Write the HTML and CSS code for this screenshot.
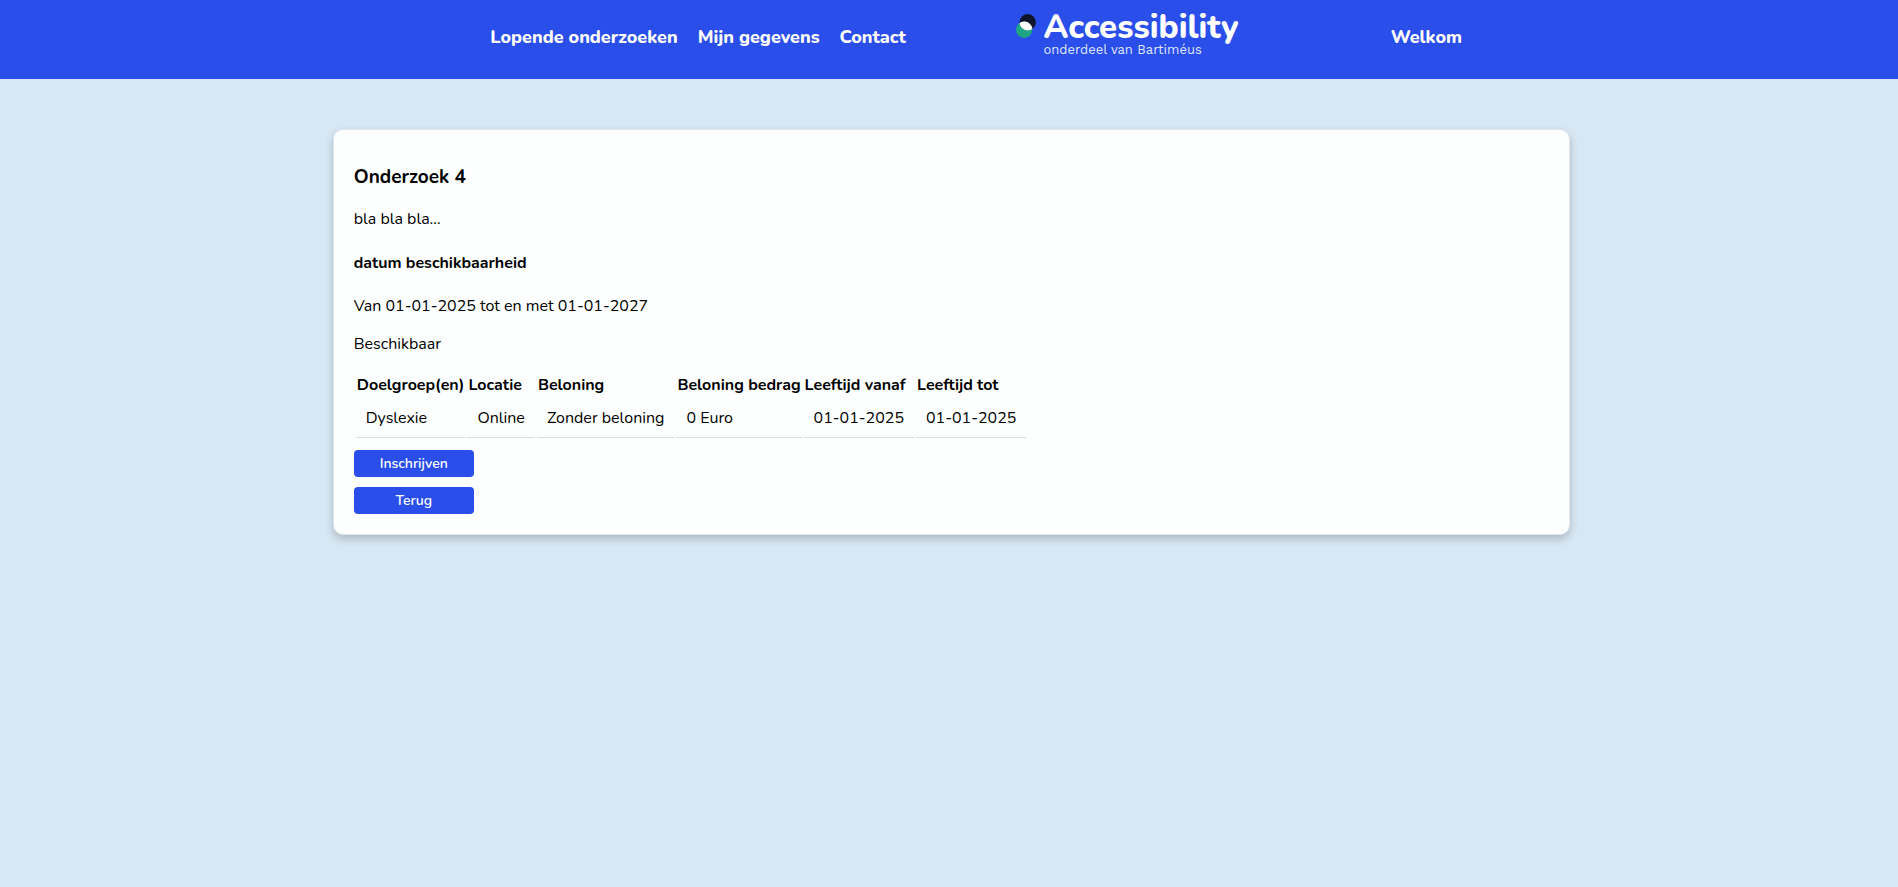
FILE: index.html
```html
<!DOCTYPE html>
<html lang="nl">
<head>
<meta charset="utf-8">
<title>Onderzoek 4 - Accessibility</title>
<link rel="stylesheet" href="styles.css">
</head>
<body>
<header class="site-header">
  <nav class="main-nav">
    <a href="#">Lopende onderzoeken</a>
    <a href="#">Mijn gegevens</a>
    <a href="#">Contact</a>
  </nav>
  <a class="logo" href="#">
    <svg class="logo-mark" viewBox="0 0 20 24" width="20" height="24" aria-hidden="true">
      <defs><clipPath id="upper"><circle cx="11.700" cy="8.200" r="8.200"/></clipPath></defs>
      <circle cx="11.700" cy="8.200" r="8.200" fill="#11152b"/>
      <circle cx="8.200" cy="15.800" r="8.200" fill="#1fa583"/>
      <circle cx="8.200" cy="15.800" r="8.200" fill="#fff" clip-path="url(#upper)"/>
    </svg>
    <span class="logo-text">
      <span class="logo-name">Accessibility</span>
      <span class="logo-sub">onderdeel van Bartiméus</span>
    </span>
  </a>
  <a class="welcome" href="#">Welkom</a>
</header>
<main class="page">
  <section class="card">
    <h3>Onderzoek 4</h3>
    <p>bla bla bla...</p>
    <h4>datum beschikbaarheid</h4>
    <p>Van 01-01-2025 tot en met 01-01-2027</p>
    <p>Beschikbaar</p>
    <table class="details">
      <thead>
        <tr><th>Doelgroep(en)</th><th>Locatie</th><th>Beloning</th><th>Beloning bedrag</th><th>Leeftijd vanaf</th><th>Leeftijd tot</th></tr>
      </thead>
      <tbody>
        <tr><td>Dyslexie</td><td>Online</td><td>Zonder beloning</td><td>0 Euro</td><td>01-01-2025</td><td>01-01-2025</td></tr>
      </tbody>
    </table>
    <div class="actions">
      <button type="button">Inschrijven</button>
      <button type="button">Terug</button>
    </div>
  </section>
</main>
</body>
</html>
```
FILE: styles.css
```css
* {
  box-sizing: border-box;
}

body {
  margin: 0;
  background: #d7e8f4;
  color: #000;
  font: 16px/22px Nunito, Lato, "Noto Sans", sans-serif;
}

.site-header {
  display: grid;
  grid-template-columns: 525fr 375fr 507fr;
  padding-left: 25.83%;
  height: 79px;
  background: #2a4eea;
}

.site-header a {
  color: #fff;
  text-decoration: none;
}

.main-nav {
  display: flex;
  gap: 20px;
}

.main-nav a,
.welcome {
  padding-top: 25px;
  font-size: 18px;
  line-height: 24px;
  font-weight: 800;
  white-space: nowrap;
}

.logo {
  display: flex;
  align-items: flex-start;
  gap: 8px;
  padding-top: 14px;
}

.logo-text {
  display: flex;
  flex-direction: column;
}

.logo-name {
  font: 800 33px/28px Nunito, "Noto Sans", sans-serif;
}

.logo-sub {
  font: 13px/15px "Work Sans", "Noto Sans", sans-serif;
  color: #dfe5fc;
}

.page {
  padding: 50px 17.28% 50px 17.53%;
}

.card {
  padding: 20px;
  border: 1px solid #e0e4e8;
  border-radius: 10px;
  background: #fdfffe;
  box-shadow: 0 4px 8px rgba(0, 0, 0, 0.2);
}

h3 {
  margin: 14px 0 18px;
  font-size: 19px;
  line-height: 26px;
}

p {
  margin: 16px 0;
}

h4 {
  margin: 22px 0 21px;
  font-size: 16px;
}

.details {
  border-spacing: 2px;
}

th {
  padding: 1px;
  text-align: left;
  white-space: nowrap;
}

td {
  padding: 8px 10px;
  border-bottom: 1px solid #ddd;
  white-space: nowrap;
}

.actions {
  display: flex;
  flex-direction: column;
  align-items: flex-start;
  gap: 10px;
  margin-top: 10px;
}

button {
  width: 120px;
  height: 27px;
  border: 0;
  border-radius: 4px;
  background: #2a4eea;
  color: #fff;
  font: 600 14px/19px Nunito, Lato, "Noto Sans", sans-serif;
}
```
